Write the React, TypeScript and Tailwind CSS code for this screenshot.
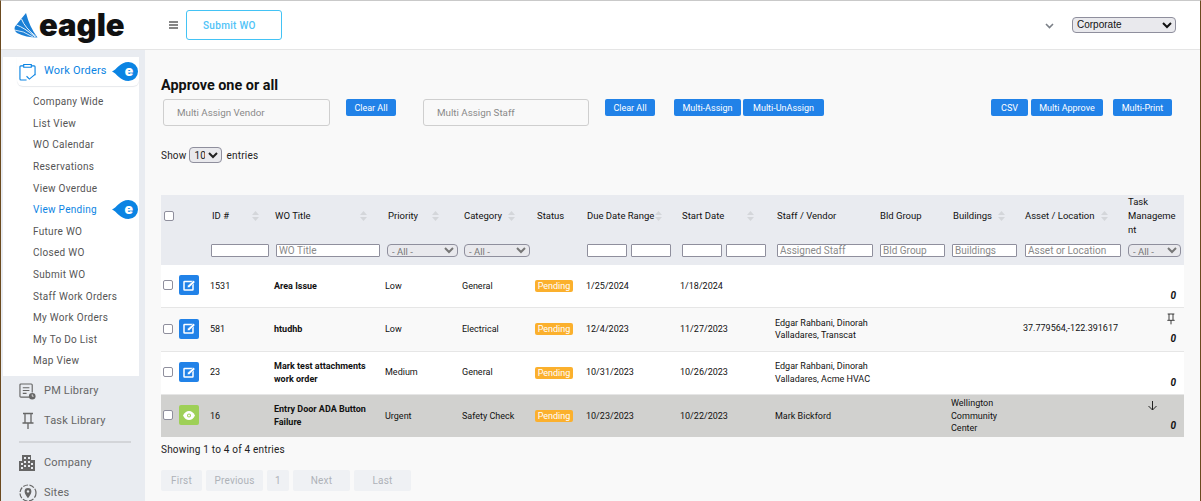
import type { ReactNode } from "react";

const font = "font-['Roboto','Liberation_Sans',sans-serif]";

function Wing() {
  return (
    <svg width="24" height="25" viewBox="0 0 24 25" className="shrink-0">
      <path d="M12 0 L1 13.500 Q-0.500 18 3 20 Q12 24.500 23.500 24.500 Q15.500 14 12 0Z" fill="#1a7fd6" />
      <path d="M7.500 6 Q11 15 22 23.500" stroke="#fff" strokeWidth="0.900" fill="none" />
      <path d="M2.500 12 Q10 14.500 21 23.800" stroke="#fff" strokeWidth="0.900" fill="none" />
      <path d="M0.500 17 Q9 17.500 19 24" stroke="#fff" strokeWidth="0.800" fill="none" />
    </svg>
  );
}

function Badge() {
  return (
    <svg width="26" height="19" viewBox="0 0 26 19" className="block shrink-0">
      <path d="M0 9.500 C5 7.500 8 0 16.500 0 A9.500 9.500 0 0 1 16.500 19 C8 19 5 11.500 0 9.500Z" fill="#0b84e3" />
      <text x="17" y="14" textAnchor="middle" fontSize="14" fontWeight="900" fill="#fff" fontFamily="Inter, sans-serif">e</text>
    </svg>
  );
}

function CalIcon() {
  return (
    <svg width="17" height="18" viewBox="0 0 18 19" fill="none" stroke="#0b84e3" strokeWidth="1.200" className="shrink-0">
      <path d="M5 3H2a1 1 0 0 0-1 1v13a1 1 0 0 0 1 1h6M13 3h3a1 1 0 0 1 1 1v9" />
      <path d="M5 1.500h8v3H5z" />
      <path d="M8 14l3 3 6-5" />
    </svg>
  );
}

function PmIcon() {
  return (
    <svg width="17" height="17" viewBox="0 0 18 18" fill="none" stroke="#666" strokeWidth="1.200" className="shrink-0">
      <path d="M11 15H2a1 1 0 0 1-1-1V2a1 1 0 0 1 1-1h11a1 1 0 0 1 1 1v8" />
      <path d="M4 5h7M4 8h7M4 11h4" />
      <circle cx="14" cy="14" r="3.500" fill="#666" stroke="none" />
      <path d="M14 12v2h1.500" stroke="#fff" strokeWidth="0.800" />
    </svg>
  );
}

function PinIcon({ size = 18, color = "#666" }: { size?: number; color?: string }) {
  return (
    <svg width={size} height={size} viewBox="0 0 18 18" fill="none" stroke={color} strokeWidth="1.300" className="block shrink-0">
      <path d="M4 1.500h10M6 1.500v9M12 1.500v9M3.500 11h11M9 11v6" />
    </svg>
  );
}

function BuildingIcon() {
  return (
    <svg width="16" height="16" viewBox="0 0 16 16" fill="#666" className="shrink-0">
      <path d="M3 0h9v5h4v11H0V6h3V0z" />
      <g fill="#e9ecf1">
        <rect x="5" y="2" width="2" height="2" />
        <rect x="9" y="2" width="2" height="2" />
        <rect x="5" y="6" width="2" height="2" />
        <rect x="9" y="6" width="2" height="2" />
        <rect x="2" y="8" width="2" height="2" />
        <rect x="12" y="8" width="2" height="2" />
        <rect x="5" y="10" width="2" height="2" />
        <rect x="9" y="10" width="2" height="2" />
        <rect x="2" y="12" width="2" height="2" />
        <rect x="12" y="12" width="2" height="2" />
      </g>
    </svg>
  );
}

function SitesIcon() {
  return (
    <svg width="18" height="18" viewBox="0 0 18 18" fill="none" className="shrink-0">
      <circle cx="9" cy="9" r="8" stroke="#666" strokeWidth="1.200" strokeDasharray="5 1.500" />
      <path d="M9 4a3.400 3.400 0 0 0-3.400 3.400C5.600 10 9 14 9 14s3.400-4 3.400-6.600A3.400 3.400 0 0 0 9 4z" fill="#666" />
      <circle cx="9" cy="7.400" r="1.200" fill="#e9ecf1" />
    </svg>
  );
}

function EditIcon() {
  return (
    <svg width="13" height="11" viewBox="0 0 13 11" fill="none">
      <rect x="1" y="1.500" width="9" height="8.500" rx="0.500" stroke="#fff" strokeWidth="1.500" />
      <path d="M4.500 7.500V5.800L10.500 0.500 12.200 2 6.300 7.500z" fill="#fff" stroke="#2182e8" strokeWidth="0.500" />
    </svg>
  );
}

function EyeIcon() {
  return (
    <svg width="12" height="9" viewBox="0 0 12 9" fill="#fff">
      <path d="M0 4.500C1.500 1.500 3.500 0 6 0s4.500 1.500 6 4.500C10.500 7.500 8.500 9 6 9S1.500 7.500 0 4.500z" />
      <circle cx="6" cy="4.500" r="2" fill="#9ed057" />
      <circle cx="6" cy="4.500" r="1" fill="#fff" />
    </svg>
  );
}

function SortArrows() {
  return (
    <svg width="7" height="10" viewBox="0 0 7 10" fill="#d4d6da" className="shrink-0">
      <path d="M3.500 0L7 4H0zM3.500 10L0 6h7z" />
    </svg>
  );
}

const subItems = [
  "Company Wide",
  "List View",
  "WO Calendar",
  "Reservations",
  "View Overdue",
  "View Pending",
  "Future WO",
  "Closed WO",
  "Submit WO",
  "Staff Work Orders",
  "My Work Orders",
  "My To Do List",
  "Map View",
];

function Sidebar() {
  return (
    <aside className="w-[144px] shrink-0 bg-[#e9ecf1] pl-[2px] pt-[7px] overflow-hidden">
      <div className="w-[136px] h-[319px] bg-white">
        <div className="ml-[14px] h-[29px] flex items-center pl-[2px] pr-[1px] rounded-b-md shadow-[0_1px_1px_#e6e8ec]">
          <CalIcon />
          <span className="ml-[8px] whitespace-nowrap text-[11px] text-[#0b84e3] tracking-[0.2px]">Work Orders</span>
          <span className="ml-auto"><Badge /></span>
        </div>
        <ul className="mt-[5px]">
          {subItems.map((s) => (
            <li
              key={s}
              className={`h-[21.600px] flex items-center pl-[30px] pr-[1px] text-[10px] tracking-[0.3px] ${
                s === "View Pending" ? "text-[#0b84e3]" : "text-[#555]"
              }`}
            >
              {s}
              {s === "View Pending" && <span className="ml-auto"><Badge /></span>}
            </li>
          ))}
        </ul>
      </div>
      <SideLink icon={<PmIcon />} label="PM Library" />
      <SideLink icon={<PinIcon />} label="Task Library" />
      <div className="ml-[16px] mt-[5px] mb-[5px] w-[112px] h-[2px] bg-[#d3d5d9]" />
      <SideLink icon={<BuildingIcon />} label="Company" />
      <SideLink icon={<SitesIcon />} label="Sites" />
    </aside>
  );
}

function SideLink({ icon, label }: { icon: ReactNode; label: string }) {
  return (
    <div className="h-[30px] flex items-center pl-[16px]">
      <span className="w-[25px] flex">{icon}</span>
      <span className="text-[11px] tracking-[0.2px] text-[#666] whitespace-nowrap">{label}</span>
    </div>
  );
}

function Btn({ children, className = "" }: { children: ReactNode; className?: string }) {
  return (
    <button className={`h-[17px] rounded-[2px] bg-[#2182e8] text-white text-[9px] leading-none shrink-0 ${className}`}>
      {children}
    </button>
  );
}

type Row = {
  id: string;
  title: string;
  priority: string;
  category: string;
  due: string;
  start: string;
  staff?: string;
  buildings?: string;
  asset?: string;
  rowClass: string;
  height: string;
  view?: boolean;
  pin?: boolean;
  arrow?: boolean;
};

const rows: Row[] = [
  { id: "1531", title: "Area Issue", priority: "Low", category: "General", due: "1/25/2024", start: "1/18/2024", rowClass: "bg-white", height: "h-[42px]" },
  { id: "581", title: "htudhb", priority: "Low", category: "Electrical", due: "12/4/2023", start: "11/27/2023", staff: "Edgar Rahbani, Dinorah Valladares, Transcat", asset: "37.779564,-122.391617", rowClass: "bg-[#f9f9f9]", height: "h-[44px]", pin: true },
  { id: "23", title: "Mark test attachments work order", priority: "Medium", category: "General", due: "10/31/2023", start: "10/26/2023", staff: "Edgar Rahbani, Dinorah Valladares, Acme HVAC", rowClass: "bg-white", height: "h-[43px]" },
  { id: "16", title: "Entry Door ADA Button Failure", priority: "Urgent", category: "Safety Check", due: "10/23/2023", start: "10/22/2023", staff: "Mark Bickford", buildings: "Wellington Community Center", rowClass: "bg-[#d1d1cf]", height: "h-[43px]", view: true, arrow: true },
];

const filter =
  "block h-[13px] border border-[#8f8f9d] rounded-[1px] bg-white px-[2px] text-[10px] font-normal leading-none text-[#111] placeholder:text-[#8a8a8a] outline-none";
const selectFilter =
  "block h-[13px] border border-[#8f8f9d] rounded-[4px] bg-[#e9e9ed] text-[9.500px] font-normal leading-none text-[#777] outline-none";

function Head({ label, sort = true, gap = "justify-between", className = "" }: { label: string; sort?: boolean; gap?: string; className?: string }) {
  return (
    <th className={`p-0 font-normal text-left align-middle ${className}`}>
      <div className={`flex items-center whitespace-nowrap ${gap}`}>
        <span>{label}</span>
        {sort && <SortArrows />}
      </div>
    </th>
  );
}

function WoTable() {
  return (
    <table className="table-fixed border-collapse w-[1023px] text-[9px] text-[#111]">
      <colgroup>
        <col className="w-[17px]" />
        <col className="w-[31px]" />
        <col className="w-[64px]" />
        <col className="w-[111px]" />
        <col className="w-[77px]" />
        <col className="w-[73px]" />
        <col className="w-[51px]" />
        <col className="w-[94px]" />
        <col className="w-[95px]" />
        <col className="w-[104px]" />
        <col className="w-[72px]" />
        <col className="w-[72px]" />
        <col className="w-[105px]" />
        <col className="w-[57px]" />
      </colgroup>
      <thead className="bg-[#e9ebf0] text-[9.500px]">
        <tr className="h-[42px]">
          <th className="p-0 pl-[3px] align-middle">
            <input type="checkbox" className="block w-[10px] h-[10px] appearance-none border border-[#8f8f9d] rounded-[2px] bg-white" />
          </th>
          <th className="p-0" />
          <Head label="ID #" className="pl-[3px] pr-[14px]" />
          <Head label="WO Title" className="pl-[2px] pr-[17px]" />
          <Head label="Priority" className="pl-[4px] pr-[22px]" />
          <Head label="Category" className="pl-[3px] pr-[18px]" gap="gap-[6px]" />
          <Head label="Status" sort={false} className="pl-[3px]" />
          <Head label="Due Date Range" className="pl-[2px]" gap="gap-[1px]" />
          <Head label="Start Date" className="pl-[3px] pr-[20px]" />
          <Head label="Staff / Vendor" sort={false} className="pl-[3px]" />
          <Head label="Bld Group" sort={false} className="pl-[2px]" />
          <Head label="Buildings" className="pl-[3px]" gap="gap-[6px]" />
          <Head label="Asset / Location" className="pl-[3px]" gap="gap-[6px]" />
          <th className="p-0 pl-[1px] font-normal text-left leading-[14px]">
            <div className="w-[50px] break-words">Task Management</div>
          </th>
        </tr>
        <tr className="h-[28px]">
          <th colSpan={2} className="p-0" />
          <th className="p-0 pt-[7px] pl-[2px] align-top"><input className={`${filter} w-[58px]`} /></th>
          <th className="p-0 pt-[7px] pl-[3px] align-top"><input className={`${filter} w-[104px]`} placeholder="WO Title" /></th>
          <th className="p-0 pt-[7px] pl-[3px] align-top">
            <select className={`${selectFilter} w-[71px]`}><option>- All -</option></select>
          </th>
          <th className="p-0 pt-[7px] pl-[3px] align-top">
            <select className={`${selectFilter} w-[66px]`}><option>- All -</option></select>
          </th>
          <th className="p-0" />
          <th className="p-0 pt-[7px] pl-[2px] align-top">
            <div className="flex gap-[4px]">
              <input className={`${filter} w-[40px]`} />
              <input className={`${filter} w-[40px]`} />
            </div>
          </th>
          <th className="p-0 pt-[7px] pl-[3px] align-top">
            <div className="flex gap-[4px]">
              <input className={`${filter} w-[40px]`} />
              <input className={`${filter} w-[40px]`} />
            </div>
          </th>
          <th className="p-0 pt-[7px] pl-[3px] align-top"><input className={`${filter} w-[96px]`} placeholder="Assigned Staff" /></th>
          <th className="p-0 pt-[7px] pl-[2px] align-top"><input className={`${filter} w-[65px]`} placeholder="Bld Group" /></th>
          <th className="p-0 pt-[7px] pl-[2px] align-top"><input className={`${filter} w-[65px]`} placeholder="Buildings" /></th>
          <th className="p-0 pt-[7px] pl-[3px] align-top"><input className={`${filter} w-[96px]`} placeholder="Asset or Location" /></th>
          <th className="p-0 pt-[7px] pl-[1px] align-top">
            <select className={`${selectFilter} w-[53px]`}><option>- All -</option></select>
          </th>
        </tr>
      </thead>
      <tbody>
        {rows.map((r, i) => (
          <tr key={r.id} className={`${r.rowClass} ${r.height} ${i < 3 ? "border-b border-[#e6e6e6]" : ""}`}>
            <td className="p-0 pl-[2px] align-middle">
              <input type="checkbox" className="block w-[10px] h-[10px] -mt-[1px] appearance-none border border-[#8f8f9d] rounded-[2px] bg-white" />
            </td>
            <td className="p-0 pl-[1px] align-middle">
              <span className={`flex w-[20px] h-[20px] -mt-[1px] items-center justify-center rounded-[2px] ${r.view ? "bg-[#9ed057]" : "bg-[#2182e8]"}`}>
                {r.view ? <EyeIcon /> : <EditIcon />}
              </span>
            </td>
            <td className="p-0 pl-[1px] pt-[1px]">{r.id}</td>
            <td className="p-0 pl-[1px] pr-[6px] font-bold leading-[12.500px]">{r.title}</td>
            <td className="p-0 pl-[1px] pt-[1px]">{r.priority}</td>
            <td className="p-0 pl-[1px] pt-[1px]">{r.category}</td>
            <td className="p-0 pl-[1px]">
              <span className="block w-[38px] text-center rounded-[2px] bg-[#fbb02d] text-[#fff] text-[9px] leading-[12px]">Pending</span>
            </td>
            <td className="p-0 pl-[1px] pt-[1px]">{r.due}</td>
            <td className="p-0 pl-[1px] pt-[1px]">{r.start}</td>
            <td className="p-0 pl-[1px] pr-[4px] leading-[12.500px]">{r.staff}</td>
            <td className="p-0" />
            <td className="p-0 pl-[1px] pr-[10px] leading-[12.500px]">{r.buildings}</td>
            <td className="p-0 pl-[1px]">{r.asset}</td>
            <td className="p-0 pr-[8px] relative">
              <div className="flex flex-col items-end justify-end h-[40px] pb-[3px]">
                {r.pin && <span className="mb-[7px] -mr-[1px]"><PinIcon size={12} color="#222" /></span>}
                {r.arrow && (
                  <svg width="11" height="11" viewBox="0 0 11 11" fill="none" stroke="#222" strokeWidth="1" className="absolute right-[26px] top-[5px]">
                    <path d="M5.500 1v9M1.500 6l4 4 4-4" />
                  </svg>
                )}
                <span className="text-[10px] font-bold italic leading-[14px]">0</span>
              </div>
            </td>
          </tr>
        ))}
      </tbody>
    </table>
  );
}

export default function App() {
  return (
    <div className={`${font} w-[1201px] h-[501px] overflow-hidden flex flex-col bg-white border-t border-[#c9c9c9] border-l border-r border-l-[#6b4a1f] border-r-[#6b4a1f]`}>
      <header className="h-[49px] shrink-0 flex items-center border-b border-[#e5e5e5] bg-white">
        <div className="w-[168px] pl-[13px] flex items-center gap-[1px]">
          <Wing />
          <span className="text-[31px] leading-none font-black font-['Inter',sans-serif] text-[#111] -mt-[2px]">eagle</span>
        </div>
        <svg width="9" height="8" viewBox="0 0 9 8" stroke="#111" strokeWidth="1.200" className="shrink-0">
          <path d="M0 1h9M0 4h9M0 7h9" />
        </svg>
        <button className="ml-[8px] w-[96px] h-[30px] rounded-[3px] border border-[#43c3f5] pl-[16px] text-left text-[#4fc3f7] text-[10px] font-medium tracking-[0.3px]">
          Submit WO
        </button>
        <svg width="9" height="6" viewBox="0 0 9 6" fill="none" stroke="#7b8088" strokeWidth="1.600" className="ml-auto mr-[18px] mt-[2px]">
          <path d="M1 1l3.500 3.500L8 1" />
        </svg>
        <select className="mr-[24px] w-[104px] h-[16px] border border-[#8f8f9d] rounded-[4px] bg-[#e9e9ed] text-[10px] leading-none text-[#111] font-['Liberation_Sans',sans-serif] outline-none -mt-[1px]">
          <option>Corporate</option>
        </select>
      </header>
      <div className="flex flex-1 min-h-0">
        <Sidebar />
        <main className="flex-1 bg-[#f9f9f9] pl-[16px] pt-[28px] text-[#222]">
          <h1 className="text-[14.400px] leading-[16px] font-bold text-[#111]">Approve one or all</h1>
          <div className="mt-[5px] flex items-start pl-[2px]">
            <input placeholder="Multi Assign Vendor" className="w-[167px] h-[27px] rounded-[3px] border border-[#cfcfcf] bg-[#f9f9f9] px-[13px] text-[9.800px] placeholder:text-[#8a8a8a] outline-none" />
            <Btn className="ml-[16px] w-[50px] pt-[1px]">Clear All</Btn>
            <input placeholder="Multi Assign Staff" className="ml-[27px] w-[166px] h-[27px] rounded-[3px] border border-[#cfcfcf] bg-[#f9f9f9] px-[13px] text-[9.800px] placeholder:text-[#8a8a8a] outline-none" />
            <Btn className="ml-[16px] w-[50px] pt-[1px]">Clear All</Btn>
            <Btn className="ml-[19px] w-[67px] pt-[1px]">Multi-Assign</Btn>
            <Btn className="ml-[2px] w-[81px] pt-[1px]">Multi-UnAssign</Btn>
            <Btn className="ml-[167px] w-[37px] pt-[1px]">CSV</Btn>
            <Btn className="ml-[3px] w-[72px] pt-[1px]">Multi Approve</Btn>
            <Btn className="ml-[10px] w-[59px] pt-[1px]">Multi-Print</Btn>
          </div>
          <div className="mt-[20px] flex items-center h-[18px] text-[10px] tracking-[0.2px]">
            Show
            <select className="ml-[3px] mr-[4px] w-[33px] h-[16px] border border-[#8f8f9d] rounded-[4px] bg-[#e9e9ed] text-[10px] leading-none outline-none">
              <option>10</option>
            </select>
            entries
          </div>
          <div className="mt-[31px]">
            <WoTable />
          </div>
          <p className="mt-[7px] text-[10px] leading-[12px] tracking-[0.2px]">Showing 1 to 4 of 4 entries</p>
          <nav className="mt-[14px] flex gap-[4px] text-[10px] tracking-[0.2px] text-[#aeb2b8]">
            <span className="w-[41px] h-[21px] flex items-center justify-center rounded-[2px] bg-[#eff1f4]">First</span>
            <span className="w-[57px] h-[21px] flex items-center justify-center rounded-[2px] bg-[#eff1f4]">Previous</span>
            <span className="w-[22px] h-[21px] flex items-center justify-center rounded-[2px] bg-[#eff1f4]">1</span>
            <span className="w-[57px] h-[21px] flex items-center justify-center rounded-[2px] bg-[#eff1f4]">Next</span>
            <span className="w-[57px] h-[21px] flex items-center justify-center rounded-[2px] bg-[#eff1f4]">Last</span>
          </nav>
        </main>
      </div>
    </div>
  );
}
